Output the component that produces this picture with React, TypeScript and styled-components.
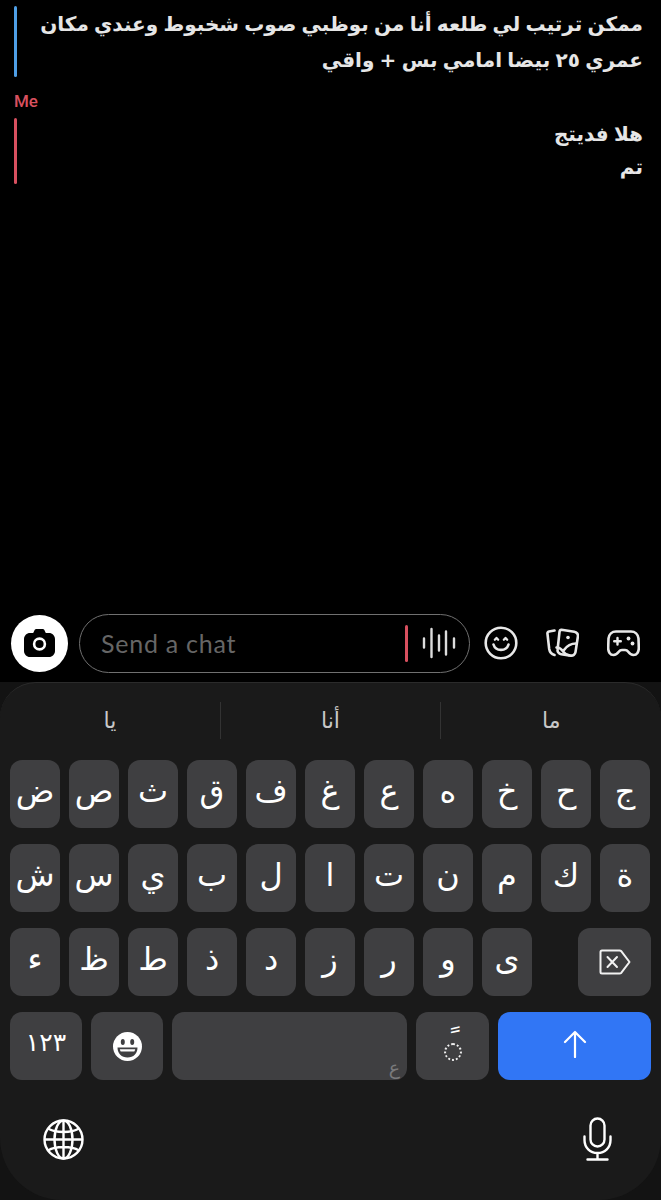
import React from "react";
import styled, { createGlobalStyle } from "styled-components";

const ARABIC = `"DejaVu Sans", "Noto Sans", sans-serif`;

const GlobalStyle = createGlobalStyle`
  html, body {
    margin: 0;
    padding: 0;
    background: #000;
  }
  * {
    box-sizing: border-box;
  }
`;

const Screen = styled.div`
  width: 661px;
  height: 1200px;
  display: flex;
  flex-direction: column;
  overflow: hidden;
  background: #000;
`;

const Messages = styled.div`
  flex: 1;
  display: flex;
  flex-direction: column;
  padding: 6px 18px 0 14px;
`;

const SenderName = styled.div`
  margin: 13px 0 7px;
  height: 20px;
  font: 500 17px/20px Roboto, sans-serif;
  color: #d8505f;
`;

const MessageRow = styled.div`
  display: flex;
  align-items: stretch;
`;

const AccentBar = styled.div<{ $color: string; $height: number }>`
  flex: none;
  width: 3px;
  height: ${(p) => p.$height}px;
  border-radius: 2px;
  background: ${(p) => p.$color};
`;

const MessageText = styled.div<{ $lineHeight: number }>`
  flex: 1;
  direction: rtl;
  font-family: ${ARABIC};
  font-weight: 700;
  font-size: 20px;
  letter-spacing: -0.5px;
  word-spacing: -1.7px;
  line-height: ${(p) => p.$lineHeight}px;
  color: #e6e6e6;
  white-space: nowrap;
`;

const ChatBar = styled.div`
  flex: none;
  height: 78px;
  display: flex;
  align-items: center;
  padding: 0 0 0 11px;
`;

const CameraButton = styled.div`
  flex: none;
  width: 57px;
  height: 57px;
  border-radius: 50%;
  background: #fff;
  display: flex;
  align-items: center;
  justify-content: center;
`;

const ChatInput = styled.div`
  flex: none;
  margin-left: 11px;
  width: 391px;
  height: 59px;
  border: 1.5px solid #707070;
  border-radius: 30px;
  display: flex;
  align-items: center;
  padding: 0 13px 0 21px;
`;

const Placeholder = styled.div`
  flex: 1;
  font: 400 25px/30px Lato, sans-serif;
  letter-spacing: 0.75px;
  color: #666;
`;

const Cursor = styled.div`
  flex: none;
  width: 3px;
  height: 37px;
  border-radius: 2px;
  background: #d8505f;
  margin-right: 14px;
`;

const ActionIcons = styled.div`
  flex: 1;
  display: flex;
  align-items: center;
  padding-left: 14px;
  gap: 28px;
`;

const KeyboardWell = styled.div`
  flex: none;
  height: 518px;
  background: #131313;
`;

const Keyboard = styled.div`
  height: 100%;
  display: flex;
  flex-direction: column;
  background: #1a1a1a;
  border-top: 1px solid #2b2b2b;
  border-radius: 36px 36px 62px 62px;
`;

const Suggestions = styled.div`
  flex: none;
  height: 77px;
  display: flex;
  align-items: flex-start;
  padding-top: 19px;
`;

const Suggestion = styled.div<{ $divided?: boolean }>`
  flex: 1;
  height: 37px;
  display: flex;
  align-items: center;
  justify-content: center;
  font-family: ${ARABIC};
  font-size: 22px;
  color: #c8c8c8;
  border-left: ${(p) => (p.$divided ? "1px solid #333" : "none")};
`;

const KeyRows = styled.div`
  display: flex;
  flex-direction: column;
  gap: 16px;
  padding: 0 10px;
`;

const KeyRow = styled.div<{ $spread?: boolean }>`
  display: flex;
  gap: 9px;
  justify-content: ${(p) => (p.$spread ? "space-between" : "flex-start")};
`;

const KeyGroup = styled.div`
  display: flex;
  gap: 9px;
`;

const Key = styled.div<{ $width?: number; $accent?: boolean }>`
  flex: none;
  width: ${(p) => p.$width ?? 50}px;
  height: 68px;
  border-radius: 12px;
  display: flex;
  align-items: center;
  justify-content: center;
  background: ${(p) => (p.$accent ? "#3176f5" : "#3f3f41")};
  color: #fff;
  font-family: ${ARABIC};
  font-size: 32px;
  line-height: 1;
`;

const LetterKey = styled(Key)`
  padding-bottom: 6px;
`;

const SpaceKey = styled(Key)`
  align-items: flex-end;
  justify-content: flex-end;
  padding: 0 7px 3px 0;
  font-size: 19px;
  color: #7a7a7c;
`;

const NumbersKey = styled(Key)`
  font-size: 25px;
  padding-bottom: 8px;
`;

const MarkKey = styled(Key)`
  flex-direction: column;
  padding-bottom: 8px;
`;

const MarkGlyph = styled.div`
  height: 20px;
  font-size: 30px;
  line-height: 36px;
  color: #fff;
`;

const DottedCircle = styled.div`
  width: 18px;
  height: 18px;
  border: 2px dotted #f0f0f0;
  border-radius: 50%;
`;

const SendKey = styled(Key)`
  padding-bottom: 4px;
`;

const BottomTools = styled.div`
  flex: 1;
  display: flex;
  align-items: flex-start;
  justify-content: space-between;
  padding: 37px 49px 0 43px;
`;

const ToolSlot = styled.div`
  height: 44px;
  display: flex;
  align-items: center;
`;

const CameraIcon = () => (
  <svg width="31" height="28" viewBox="0 0 31 28">
    <path
      d="M6 4h3.2l1.2-2.6C10.8.6 11.5 0 12.4 0h6.2c.9 0 1.6.6 2 1.4L21.8 4H25c3.3 0 6 2.7 6 6v12c0 3.3-2.7 6-6 6H6c-3.3 0-6-2.7-6-6V10c0-3.3 2.7-6 6-6z"
      fill="#000"
    />
    <circle cx="15.5" cy="15" r="5.4" fill="none" stroke="#fff" strokeWidth="2.6" />
  </svg>
);

const Waveform = () => (
  <svg width="34" height="32" viewBox="0 0 34 32" stroke="#dcdcdc" strokeWidth="2.4" strokeLinecap="round">
    <path d="M2 11.5v9M9.5 2v28M17 8.5v15M24 4.5v23M32 11.5v9" />
  </svg>
);

const SmileIcon = () => (
  <svg width="34" height="34" viewBox="0 0 34 34" fill="none" stroke="#e8e8e8" strokeWidth="2.6" strokeLinecap="round" strokeLinejoin="round">
    <circle cx="17" cy="17" r="15.3" />
    <path d="M10.800 13.800l1.700-1.900 1.700 1.900M19.800 13.800l1.700-1.900 1.700 1.900" strokeWidth="2.200" />
    <path d="M9.500 18.500c1 3.400 4 5.400 7.500 5.400s6.500-2 7.500-5.400" />
  </svg>
);

const StickerIcon = () => (
  <svg width="33" height="30" viewBox="0 0 33 30" fill="none" stroke="#e8e8e8" strokeWidth="2.6" strokeLinecap="round" strokeLinejoin="round">
    <path d="M8.500 2.500L3 3.500C1.800 3.800 1.200 4.800 1.500 6L3.200 21c.5 3 2 5 5.300 6" />
    <path d="M15.500 1.800l12.800 1.900c2.400.4 4 2.500 3.600 4.800l-2.400 15.500c-.4 2.400-2.500 4-4.800 3.600l-9.500-1.400c-2.400-.4-4-2.500-3.600-4.800L13.500 4c.2-1.300 1-2.300 2-2.200z" />
    <path d="M10.500 19.500c3-.5 4.500 1 7 4.500 1 1.400 4 3 5.500 3.300M18 22c2.500-3.500 6-6.500 12-6.500" />
    <circle cx="22" cy="9.500" r="1.800" fill="#e8e8e8" stroke="none" />
  </svg>
);

const GameIcon = () => (
  <svg width="33" height="27" viewBox="0 0 33 27" fill="none" stroke="#e8e8e8" strokeLinecap="round" strokeLinejoin="round">
    <path
      strokeWidth="2.6"
      d="M9 1.500h15c4 0 7 2.800 7.500 7l.3 9c.2 4.500-2 7.500-5.300 7.500-2.500 0-4-1.500-5.500-3.500-.8-1.200-1.700-1.500-3-1.500h-3c-1.300 0-2.200.3-3 1.500-1.500 2-3 3.500-5.500 3.500-3.300 0-5.500-3-5.300-7.500l.3-9c.5-4.200 3.500-7 7.500-7z"
    />
    <path strokeWidth="2.400" d="M10.500 8v6.500M7.200 11.200h6.600" />
    <circle cx="21.500" cy="8.500" r="1.900" fill="#e8e8e8" stroke="none" />
    <circle cx="25.500" cy="13.500" r="1.900" fill="#e8e8e8" stroke="none" />
  </svg>
);

const BackspaceIcon = () => (
  <svg width="32" height="26" viewBox="0 0 32 26" fill="none" stroke="#f2f2f2" strokeWidth="2" strokeLinejoin="round" strokeLinecap="round">
    <path d="M3 1.500h17.500c.8 0 1.400.3 1.900.8L30.500 13l-8.100 10.700c-.5.500-1.100.8-1.900.8H3c-.8 0-1.500-.7-1.500-1.500V3c0-.8.700-1.500 1.500-1.500z" />
    <path d="M8.500 8l9.500 10M18 8l-9.500 10" />
  </svg>
);

const EmojiIcon = () => (
  <svg width="29" height="29" viewBox="0 0 29 29">
    <ellipse cx="14.500" cy="14.500" rx="14.500" ry="14.500" fill="#fff" />
    <ellipse cx="9.800" cy="10" rx="2" ry="3" fill="#3f3f41" />
    <ellipse cx="19.200" cy="10" rx="2" ry="3" fill="#3f3f41" />
    <path d="M4.500 15.500h20c0 6-4 10-10 10s-10-4-10-10z" fill="#3f3f41" />
    <path d="M6.800 17.300h15.400c-.2.900-.5 1.700-.9 2.300H7.700c-.4-.600-.7-1.400-.9-2.300z" fill="#fff" />
  </svg>
);

const ArrowIcon = () => (
  <svg width="24" height="28" viewBox="0 0 24 28" fill="none" stroke="#fff" strokeWidth="2.200" strokeLinecap="round" strokeLinejoin="round">
    <path d="M12 27V2M2 12L12 2l10 10" />
  </svg>
);

const GlobeIcon = () => (
  <svg width="41" height="41" viewBox="0 0 41 41" fill="none" stroke="#fff" strokeWidth="2.400">
    <circle cx="20.500" cy="20.500" r="19" />
    <ellipse cx="20.500" cy="20.500" rx="9" ry="19" />
    <path d="M20.500 1.500v38M1.500 20.500h38M5 9.500c4 2.500 9.500 3.500 15.500 3.500S32 12 36 9.500M5 31.500c4-2.500 9.500-3.500 15.500-3.500S32 29 36 31.500" />
  </svg>
);

const MicIcon = () => (
  <svg width="29" height="44" viewBox="0 0 29 44" fill="none" stroke="#fff" strokeWidth="2.400" strokeLinecap="round">
    <rect x="7.500" y="1.500" width="14" height="28" rx="7" />
    <path d="M1.500 19.500v3.500c0 7.500 5.500 13 13 13s13-5.500 13-13v-3.500M14.500 36v6.500M4.500 42.500h20" />
  </svg>
);

const ROW_ONE = ["ض", "ص", "ث", "ق", "ف", "غ", "ع", "ه", "خ", "ح", "ج"];
const ROW_TWO = ["ش", "س", "ي", "ب", "ل", "ا", "ت", "ن", "م", "ك", "ة"];
const ROW_THREE = ["ء", "ظ", "ط", "ذ", "د", "ز", "ر", "و", "ى"];

const App = () => {
  return (
    <Screen>
      <GlobalStyle />
      <Messages>
        <MessageRow>
          <AccentBar $color="#4f9fe6" $height={71} />
          <MessageText $lineHeight={36}>
            ممكن ترتيب لي طلعه أنا من بوظبي صوب شخبوط وعندي مكان
            <br />
            عمري ٢٥ بيضا امامي بس + واقي
          </MessageText>
        </MessageRow>
        <SenderName>Me</SenderName>
        <MessageRow>
          <AccentBar $color="#d8505f" $height={66} />
          <MessageText $lineHeight={33}>
            هلا فديتج
            <br />
            تم
          </MessageText>
        </MessageRow>
      </Messages>
      <ChatBar>
        <CameraButton>
          <CameraIcon />
        </CameraButton>
        <ChatInput>
          <Placeholder>Send a chat</Placeholder>
          <Cursor />
          <Waveform />
        </ChatInput>
        <ActionIcons>
          <SmileIcon />
          <StickerIcon />
          <GameIcon />
        </ActionIcons>
      </ChatBar>
      <KeyboardWell>
        <Keyboard>
          <Suggestions>
            <Suggestion>يا</Suggestion>
            <Suggestion $divided>أنا</Suggestion>
            <Suggestion $divided>ما</Suggestion>
          </Suggestions>
          <KeyRows>
            <KeyRow>
              {ROW_ONE.map((letter) => (
                <LetterKey key={letter}>{letter}</LetterKey>
              ))}
            </KeyRow>
            <KeyRow>
              {ROW_TWO.map((letter) => (
                <LetterKey key={letter}>{letter}</LetterKey>
              ))}
            </KeyRow>
            <KeyRow $spread>
              <KeyGroup>
                {ROW_THREE.map((letter) => (
                  <LetterKey key={letter}>{letter}</LetterKey>
                ))}
              </KeyGroup>
              <Key $width={73}>
                <BackspaceIcon />
              </Key>
            </KeyRow>
            <KeyRow>
              <NumbersKey $width={72}>١٢٣</NumbersKey>
              <Key $width={72}>
                <EmojiIcon />
              </Key>
              <SpaceKey $width={235}>ع</SpaceKey>
              <MarkKey $width={73}>
                <MarkGlyph>{"\u00A0\u064B"}</MarkGlyph>
                <DottedCircle />
              </MarkKey>
              <SendKey $width={153} $accent>
                <ArrowIcon />
              </SendKey>
            </KeyRow>
          </KeyRows>
          <BottomTools>
            <ToolSlot>
              <GlobeIcon />
            </ToolSlot>
            <ToolSlot>
              <MicIcon />
            </ToolSlot>
          </BottomTools>
        </Keyboard>
      </KeyboardWell>
    </Screen>
  );
};

export default App;
